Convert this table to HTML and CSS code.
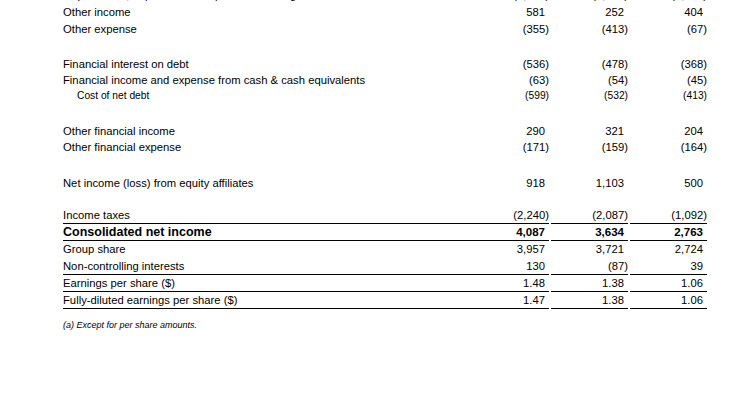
FILE: index.html
```html
<!DOCTYPE html>
<html lang="en">
<head>
<meta charset="utf-8">
<title>Consolidated statement of income</title>
<link rel="stylesheet" href="styles.css">
</head>
<body>
<div class="statement">
  <div class="group g-top">
    <div class="row"><span class="label">Depreciation, depletion and impairment of tangible assets and mineral interests</span><span class="v">(2,851)</span><span class="v">(2,914)</span><span class="v">(3,122)</span></div>
    <div class="row"><span class="label">Other income</span><span class="v p">581</span><span class="v p">252</span><span class="v p">404</span></div>
    <div class="row"><span class="label">Other expense</span><span class="v">(355)</span><span class="v">(413)</span><span class="v">(67)</span></div>
  </div>

  <div class="group g-debt tight">
    <div class="row"><span class="label">Financial interest on debt</span><span class="v">(536)</span><span class="v">(478)</span><span class="v">(368)</span></div>
    <div class="row"><span class="label">Financial income and expense from cash &amp; cash equivalents</span><span class="v">(63)</span><span class="v">(54)</span><span class="v">(45)</span></div>
    <div class="row small"><span class="label">Cost of net debt</span><span class="v">(599)</span><span class="v">(532)</span><span class="v">(413)</span></div>
  </div>

  <div class="group g-fin tight">
    <div class="row"><span class="label">Other financial income</span><span class="v p">290</span><span class="v p">321</span><span class="v p">204</span></div>
    <div class="row"><span class="label">Other financial expense</span><span class="v">(171)</span><span class="v">(159)</span><span class="v">(164)</span></div>
  </div>

  <div class="group g-eq tight">
    <div class="row"><span class="label">Net income (loss) from equity affiliates</span><span class="v p">918</span><span class="v p">1,103</span><span class="v p">500</span></div>
  </div>

  <div class="group g-net">
    <div class="row ruled"><span class="label">Income taxes</span><span class="v">(2,240)</span><span class="v">(2,087)</span><span class="v">(1,092)</span></div>
    <div class="row ruled total"><span class="label">Consolidated net income</span><span class="v p">4,087</span><span class="v p">3,634</span><span class="v p">2,763</span></div>
    <div class="row"><span class="label">Group share</span><span class="v p">3,957</span><span class="v p">3,721</span><span class="v p">2,724</span></div>
    <div class="row ruled"><span class="label">Non-controlling interests</span><span class="v p">130</span><span class="v">(87)</span><span class="v p">39</span></div>
    <div class="row ruled"><span class="label">Earnings per share ($)</span><span class="v p">1.48</span><span class="v p">1.38</span><span class="v p">1.06</span></div>
    <div class="row ruled"><span class="label">Fully-diluted earnings per share ($)</span><span class="v p">1.47</span><span class="v p">1.38</span><span class="v p">1.06</span></div>
  </div>

  <p class="footnote">(a) Except for per share amounts.</p>
</div>
</body>
</html>
```

FILE: styles.css
```css
html, body {
  margin: 0;
  padding: 0;
  background: #ffffff;
}

body {
  color: #000000;
  font-family: "Liberation Sans", Arial, sans-serif;
  font-size: 11.25px;
}

.statement {
  width: 644px;
  margin-top: -13px;
  padding-left: 63px;
}

.group {
  display: flex;
  flex-direction: column;
}

.g-debt { margin-top: 18px; }
.g-fin { margin-top: 19px; }
.g-eq { margin-top: 20px; }
.g-net { margin-top: 16px; }

.row {
  display: grid;
  grid-template-columns: 1fr 79px 79px 79px;
}

.row > span {
  height: 16px;
  line-height: 16px;
  white-space: nowrap;
  border-bottom: 1px solid transparent;
}

.tight .row > span {
  border-bottom: 0;
}

.row.ruled > span {
  border-bottom-color: #000000;
}

.label {
  overflow: hidden;
}

.v {
  text-align: right;
}

.v + .v {
  margin-left: 2px;
}

.v.p {
  padding-right: 4px;
}

.row.small > span {
  font-size: 10.25px;
}

.row.small .label {
  padding-left: 14px;
}

.row.total > span {
  font-weight: bold;
  font-size: 11.5px;
}

.row.total .label {
  font-size: 12.5px;
}

.footnote {
  margin: 10px 0 0;
  font-size: 9px;
  line-height: 12px;
  font-style: italic;
}
```
